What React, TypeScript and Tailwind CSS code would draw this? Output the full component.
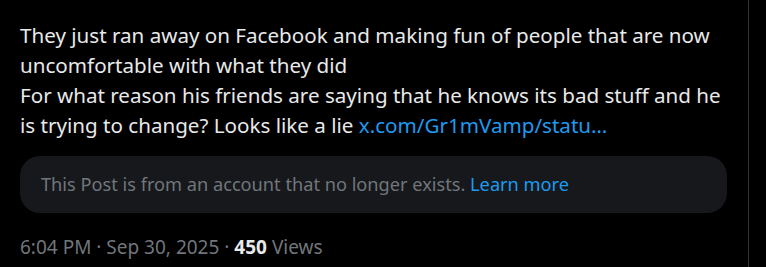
export default function App() {
  return (
    <div className="w-[766px] h-[267px] bg-black flex overflow-hidden" style={{ fontFamily: '"Noto Sans", "Open Sans", sans-serif' }}>
      <div className="w-[749px] pl-5 pr-[21px] pt-[20px] border-r border-[#2f3336] flex flex-col">
        <p className="text-[20.6px] leading-[30px] text-[#e7e9ea]">
          They just ran away on Facebook and making fun of people that are now uncomfortable with what they did
          <br />
          For what reason his friends are saying that he knows its bad stuff and he is trying to change? Looks like a lie{' '}
          <span className="text-[#1d9bf0]">x.com/Gr1mVamp/statu…</span>
        </p>
        <div className="mt-[16px] h-[57px] rounded-[20px] bg-[#16181c] flex items-center px-[21px] text-[18.2px] text-[#71767b]">
          <span>
            This Post is from an account that no longer exists.{' '}
            <span className="text-[#1d9bf0]">Learn more</span>
          </span>
        </div>
        <div className="mt-[20px] text-[19px] text-[#71767b]">
          6:04 PM · Sep 30, 2025 · <span className="font-bold text-[#e7e9ea]">450</span> Views
        </div>
      </div>
    </div>
  )
}
